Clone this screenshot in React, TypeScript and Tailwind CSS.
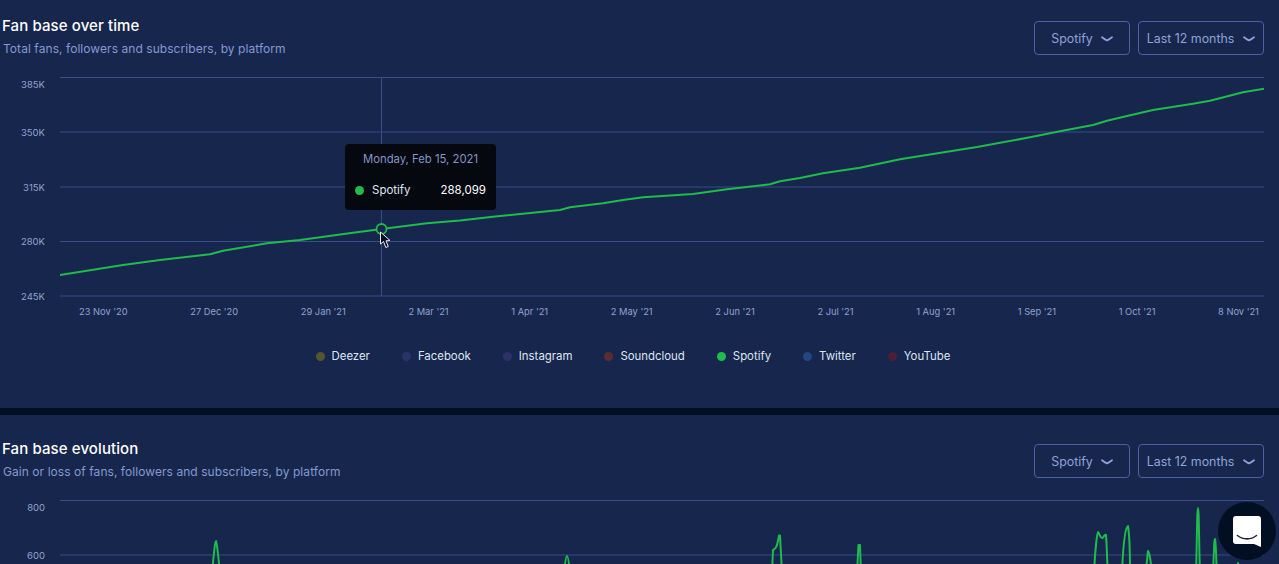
const xTicks = ["23 Nov '20", "27 Dec '20", "29 Jan '21", "2 Mar '21", "1 Apr '21", "2 May '21", "2 Jun '21", "2 Jul '21", "1 Aug '21", "1 Sep '21", "1 Oct '21", "8 Nov '21"];

const legend = [
  { name: "Deezer", dot: "bg-[#55552f]" },
  { name: "Facebook", dot: "bg-[#273566]" },
  { name: "Instagram", dot: "bg-[#32306b]" },
  { name: "Soundcloud", dot: "bg-[#5a2d30]" },
  { name: "Spotify", dot: "bg-[#1fbb4c]" },
  { name: "Twitter", dot: "bg-[#25477f]" },
  { name: "YouTube", dot: "bg-[#4c1f38]" },
];

const growth =
  "M60 275 L123 265 L160 260 L210 254.300 L223 250.700 L267 243.300 L300 240 L353 232.700 L381.700 229 L427 223.300 L460 220.500 L493 216.700 L560 210 L570 207.300 L603 203.300 L623 200 L643 197.300 L693 194 L727 189.300 L770 184.300 L780 181.300 L800 178 L823 173.300 L860 167.700 L900 159.300 L977 147 L1030 137.300 L1060 131.300 L1093 125 L1107 120.700 L1127 116 L1153 110 L1193 103.700 L1210 100.700 L1243 92.300 L1264 88.700";

const spikes = [
  "M212 150 C214 130 215 118 216 118 C217 120 218 130 220 150",
  "M564 150 C565 140 566 133 567 133 C568 133 569 140 570 150",
  "M772 150 L773 127 C776 126 777 124 779 112.5 L780 112.5 L782 150",
  "M857 150 L858.500 122 L860 122 L861 150",
  "M1094 150 C1095 130 1097 109 1098 109 C1100 111 1100 115 1102 115 C1104 115 1104 111 1106 112 C1107 125 1107 140 1108 150",
  "M1122 150 C1123 125 1125 105 1128 103 C1130 115 1130 135 1130 150",
  "M1146 150 C1147 135 1148 128 1148 128 C1150 130 1151 140 1152 150",
  "M1196 150 C1197 120 1197 85 1198 85 C1199 85 1199 125 1200 150",
  "M1213 150 C1214 130 1214 116 1215 116 C1216 120 1216 135 1217 150",
  "M1236 150 L1238 140 L1240 150",
];

function Chevron() {
  return (
    <svg width="12" height="6" viewBox="0 0 12 6" fill="none" stroke="currentColor" strokeWidth="1.8" strokeLinecap="round" strokeLinejoin="round">
      <path d="M1 1.2 C3 2.6 4.500 3.800 6 4.300 C7.500 3.800 9 2.600 11 1.200" />
    </svg>
  );
}

function Select({ label, width, gap }: { label: string; width: string; gap: string }) {
  return (
    <button className={`flex h-[34px] items-center justify-center rounded-[4px] border border-[#4a61a3] pt-[2px] text-[12.4px] text-[#8fa3d9] ${width} ${gap}`}>
      {label}
      <Chevron />
    </button>
  );
}

function Header({ title, subtitle }: { title: string; subtitle: string }) {
  return (
    <div className="flex items-start justify-between">
      <div>
        <h2 className="pt-[1px] text-[15px] leading-[20px] font-medium tracking-[0.1px] text-white">{title}</h2>
        <p className="ml-[1px] mt-[4px] text-[12px] leading-[18px] tracking-[0.06px] text-[#8599d0]">{subtitle}</p>
      </div>
      <div className="mt-[6px] flex gap-[8px]">
        <Select label="Spotify" width="w-[96px]" gap="gap-[8px]" />
        <Select label="Last 12 months" width="w-[126px]" gap="gap-[9px]" />
      </div>
    </div>
  );
}

function YAxis({ labels }: { labels: string[] }) {
  return (
    <div className="flex w-[43px] shrink-0 flex-col items-end pt-[7px] text-[9.5px] leading-[12px] text-[#92a3cf]">
      {labels.map((label, i) => (
        <span key={label} className={i === 0 ? "h-[12px]" : i === 1 ? "mt-[36px] h-[12px]" : "mt-[42.500px] h-[12px]"}>
          {label}
        </span>
      ))}
    </div>
  );
}

function Plot({ children }: { children: React.ReactNode }) {
  return (
    <svg className="ml-[15px] shrink-0" width="1204" height="228" viewBox="60 72 1204 228" fill="none">
      {[77.5, 132, 187, 241.5, 296].map((y) => (
        <line key={y} x1="60" x2="1264" y1={y} y2={y} stroke="#394d8b" strokeWidth="1" />
      ))}
      {children}
    </svg>
  );
}

function ChatBubble() {
  return (
    <div className="absolute left-[1218px] top-[502px] flex h-[58px] w-[58px] items-center justify-center rounded-full bg-[#020f22]">
      <svg width="28" height="31" viewBox="0 0 28 31">
        <path d="M3 0 H25 A3 3 0 0 1 28 3 V31 L21 28 H3 A3 3 0 0 1 0 25 V3 A3 3 0 0 1 3 0 Z" fill="#ffffff" />
        <path d="M4.500 19.500 C10 24 18 24 23.500 19.500" fill="none" stroke="#17264c" strokeWidth="1.600" strokeLinecap="round" />
      </svg>
    </div>
  );
}

function Tooltip() {
  return (
    <div className="absolute left-[345px] top-[144px] h-[66px] w-[151px] rounded-[4px] bg-[#05080f] px-[10px] pt-[7px]">
      <div className="text-center text-[11.300px] leading-[16px] text-[#8496c4]">Monday, Feb 15, 2021</div>
      <div className="mt-[15px] flex items-center text-[11.500px] leading-[16px]">
        <span className="h-[9px] w-[9px] rounded-full bg-[#1fbb4c]" />
        <span className="ml-[8px] text-[#dfe5f3]">Spotify</span>
        <span className="ml-auto text-white">288,099</span>
      </div>
    </div>
  );
}

function Cursor() {
  return (
    <svg className="absolute left-[379px] top-[231px]" width="13" height="18" viewBox="0 0 13 18">
      <path d="M1.500 1 L1.500 13 L4.500 10.500 L6.800 16.500 L9.300 15.500 L7 9.800 L11 9.500 Z" fill="#0b1020" stroke="#e8ebf2" strokeWidth="1" strokeLinejoin="round" />
    </svg>
  );
}

export default function App() {
  return (
    <div className="relative h-[564px] overflow-hidden bg-[#17264c] font-['Inter',sans-serif]">
      <section className="h-[408px] pl-[2px] pr-[15px] pt-[15px]">
        <Header title="Fan base over time" subtitle="Total fans, followers and subscribers, by platform" />
        <div className="mt-[14px] flex">
          <YAxis labels={["385K", "350K", "315K", "280K", "245K"]} />
          <Plot>
            <line x1="381.500" x2="381.500" y1="77" y2="296" stroke="#394d8b" strokeWidth="1" />
            <path d={growth} stroke="#1fbb4c" strokeWidth="2" strokeLinejoin="round" />
            <circle cx="381.500" cy="229" r="5" fill="#17264c" stroke="#1fbb4c" strokeWidth="1.800" />
          </Plot>
        </div>
        <div className="mt-[2px] flex justify-between pl-[77px] pr-[5px] text-[9.300px] leading-[14px] text-[#92a3cf]">
          {xTicks.map((tick) => (
            <span key={tick}>{tick}</span>
          ))}
        </div>
        <div className="mt-[29px] flex h-[18px] items-center justify-center gap-[32px] text-[11.400px] text-[#dfe5f3]">
          {legend.map((item) => (
            <div key={item.name} className="flex items-center gap-[7px]">
              <span className={`h-[9px] w-[9px] rounded-full ${item.dot}`} />
              {item.name}
            </div>
          ))}
        </div>
      </section>
      <div className="h-[7px] bg-[#020f22]" />
      <section className="pl-[2px] pr-[15px] pt-[23px]">
        <Header title="Fan base evolution" subtitle="Gain or loss of fans, followers and subscribers, by platform" />
        <div className="mt-[14px] flex">
          <YAxis labels={["800", "600"]} />
          <Plot>
            {spikes.map((d) => (
              <path key={d} d={d} stroke="#1fbb4c" strokeWidth="2" strokeLinejoin="round" />
            ))}
          </Plot>
        </div>
      </section>
      <Tooltip />
      <Cursor />
      <ChatBubble />
    </div>
  );
}
